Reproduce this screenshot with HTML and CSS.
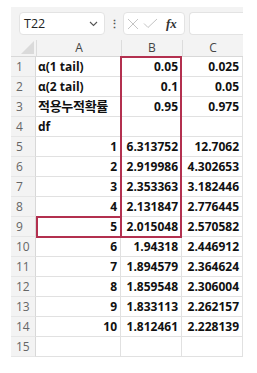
FILE: index.html
```html
<!DOCTYPE html>
<html>
<head>
<link rel="stylesheet" href="styles.css">
</head>
<body>

<div class="xl">
  <div class="bar">
    <div class="namebox">
      <span>T22</span>
      <svg class="chev" width="9" height="6" viewBox="0 0 9 6"><path d="M1 1 L4.5 4.5 L8 1" fill="none" stroke="#555" stroke-width="1.1"/></svg>
    </div>
    <div class="dots">⋮</div>
    <div class="fxbox">
      <svg width="12" height="12" viewBox="0 0 12 12"><path d="M1 1 L11 11 M11 1 L1 11" stroke="#c4c4c4" stroke-width="1"/></svg>
      <svg width="15" height="11" viewBox="0 0 15 11"><path d="M1 5.5 L5 9.5 L14 1" fill="none" stroke="#c4c4c4" stroke-width="1"/></svg>
      <span class="fx">fx</span>
    </div>
    <div class="formula"></div>
  </div>

  <div class="grid">
    <div class="corner"><div class="tri"></div></div>
    <div class="colh">A</div>
    <div class="colh">B</div>
    <div class="colh">C</div>

    <div class="rowh">1</div><div class="cell txt">α(1 tail)</div><div class="cell">0.05</div><div class="cell">0.025</div>
    <div class="rowh">2</div><div class="cell txt">α(2 tail)</div><div class="cell">0.1</div><div class="cell">0.05</div>
    <div class="rowh">3</div><div class="cell txt ko">적용누적확률</div><div class="cell">0.95</div><div class="cell">0.975</div>
    <div class="rowh">4</div><div class="cell txt">df</div><div class="cell"></div><div class="cell"></div>
    <div class="rowh">5</div><div class="cell">1</div><div class="cell">6.313752</div><div class="cell">12.7062</div>
    <div class="rowh">6</div><div class="cell">2</div><div class="cell">2.919986</div><div class="cell">4.302653</div>
    <div class="rowh">7</div><div class="cell">3</div><div class="cell">2.353363</div><div class="cell">3.182446</div>
    <div class="rowh">8</div><div class="cell">4</div><div class="cell">2.131847</div><div class="cell">2.776445</div>
    <div class="rowh">9</div><div class="cell">5</div><div class="cell">2.015048</div><div class="cell">2.570582</div>
    <div class="rowh">10</div><div class="cell">6</div><div class="cell">1.94318</div><div class="cell">2.446912</div>
    <div class="rowh">11</div><div class="cell">7</div><div class="cell">1.894579</div><div class="cell">2.364624</div>
    <div class="rowh">12</div><div class="cell">8</div><div class="cell">1.859548</div><div class="cell">2.306004</div>
    <div class="rowh">13</div><div class="cell">9</div><div class="cell">1.833113</div><div class="cell">2.262157</div>
    <div class="rowh">14</div><div class="cell">10</div><div class="cell">1.812461</div><div class="cell">2.228139</div>
    <div class="rowh">15</div><div class="cell"></div><div class="cell"></div><div class="cell"></div>

    <div class="sel sel-b"></div>
    <div class="sel sel-a"></div>
  </div>
</div>

</body>
</html>
```

FILE: styles.css
```css
body {
  margin: 0;
  background: #fff;
  font-family: "Open Sans", "Noto Sans", "Noto Sans CJK KR", sans-serif;
}

.xl {
  margin: 7px 0 0 11px;
  width: 232px;
  background: #f3f3f3;
}

.bar {
  display: flex;
  align-items: center;
  height: 33px;
  padding-left: 8px;
}

.namebox {
  display: flex;
  align-items: center;
  justify-content: space-between;
  box-sizing: border-box;
  width: 86px;
  height: 23px;
  padding: 0 6px 0 4px;
  background: #fff;
  border: 1px solid #e3e3e3;
  border-radius: 4px;
  font-size: 12.5px;
  color: #222;
}

.dots {
  width: 18px;
  text-align: center;
  font-size: 11px;
  font-weight: bold;
  color: #555;
}

.fxbox {
  display: flex;
  align-items: center;
  gap: 4px;
  box-sizing: border-box;
  width: 62px;
  height: 23px;
  padding-left: 3px;
  background: #fff;
  border: 1px solid #e3e3e3;
  border-radius: 4px;
}

.fx {
  margin-left: 4px;
  font-family: "Liberation Serif", serif;
  font-style: italic;
  font-weight: bold;
  font-size: 13px;
  color: #333;
}

.formula {
  flex: 1;
  height: 23px;
  box-sizing: border-box;
  margin-left: 4px;
  background: #fff;
  border: 1px solid #e3e3e3;
  border-right: none;
  border-radius: 4px 0 0 4px;
}

.grid {
  display: grid;
  position: relative;
  grid-template-columns: 25px 85px 61px 61px;
  grid-template-rows: 17px repeat(15, 20px);
  background: #fff;
}

.corner {
  background: #f3f3f3;
  border-bottom: 1px solid #d8d8d8;
  position: relative;
}

.tri {
  position: absolute;
  right: 2px;
  bottom: 2px;
  width: 0;
  height: 0;
  border-left: 13px solid transparent;
  border-bottom: 13px solid #dadada;
}

.colh {
  background: #f3f3f3;
  border-left: 1px solid #dcdcdc;
  border-bottom: 1px solid #d8d8d8;
  text-align: center;
  font-size: 12px;
  line-height: 16px;
  color: #444;
}

.rowh {
  background: #f3f3f3;
  border-right: 1px solid #d8d8d8;
  border-bottom: 1px solid #e6e6e6;
  padding-left: 5px;
  font-size: 12px;
  line-height: 19px;
  color: #666;
}

.cell {
  border-right: 1px solid #e1e1e1;
  border-bottom: 1px solid #e1e1e1;
  padding-right: 3px;
  text-align: right;
  font-size: 12px;
  font-weight: bold;
  line-height: 19px;
  color: #111;
  white-space: nowrap;
}

.cell.txt {
  text-align: left;
  padding-left: 2px;
}

.cell.ko {
  font-size: 13px;
  letter-spacing: -0.3px;
}

/* selection outlines sit over the cells, placed by grid area */
.sel {
  position: absolute;
  border: 2px solid #b3304f;
}

.sel-b {
  grid-column: 3 / 4;
  grid-row: 2 / 11;
  top: -1px;
  bottom: -1px;
  left: -1px;
  right: 0;
}

.sel-a {
  grid-column: 2 / 3;
  grid-row: 10 / 11;
  top: -1px;
  bottom: -1px;
  left: 0;
  right: -1px;
}
```
